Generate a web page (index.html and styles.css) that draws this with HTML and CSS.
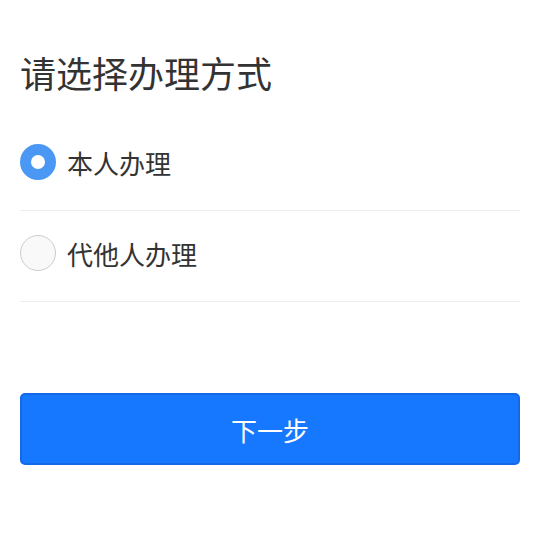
FILE: index.html
```html
<!DOCTYPE html>
<html lang="zh-CN">
<head>
    <meta charset="UTF-8">
    <meta name="viewport" content="width=device-width, initial-scale=1.0">
    <title>请选择办理方式</title>
    <link rel="stylesheet" href="styles.css">
</head>
<body>
    <div class="page">
        <h1 class="title">请选择办理方式</h1>
        <ul class="options">
            <li class="option">
                <span class="radio checked"></span>
                <span class="label">本人办理</span>
            </li>
            <li class="option">
                <span class="radio"></span>
                <span class="label">代他人办理</span>
            </li>
        </ul>
        <button class="next">下一步</button>
    </div>
</body>
</html>
```

FILE: styles.css
```css
body {
    margin: 0;
    padding: 0;
    font-family: "Noto Sans CJK SC", "Noto Sans", sans-serif;
    color: #333;
    background: #fff;
}
.page {
    padding: 46px 20px 20px;
}
.title {
    margin: 0;
    font-size: 36px;
    font-weight: normal;
    line-height: 52px;
}
.options {
    list-style: none;
    margin: 22px 0 0;
    padding: 0;
}
.option {
    box-sizing: border-box;
    display: flex;
    align-items: center;
    height: 91px;
    padding-bottom: 6px;
    border-bottom: 1px solid #eee;
}
.radio {
    box-sizing: border-box;
    width: 36px;
    height: 36px;
    border-radius: 50%;
    border: 1px solid #ccc;
    background: #f9f9f9;
    margin-right: 11px;
}
.radio.checked {
    border: 11px solid #4a97f4;
    background: #fff;
}
.label {
    font-size: 26px;
}
.next {
    display: block;
    width: 100%;
    height: 72px;
    margin-top: 91px;
    background: #1677ff;
    border: 2px solid #1469e8;
    border-radius: 5px;
    color: #fff;
    font-family: inherit;
    font-size: 26px;
}
```
